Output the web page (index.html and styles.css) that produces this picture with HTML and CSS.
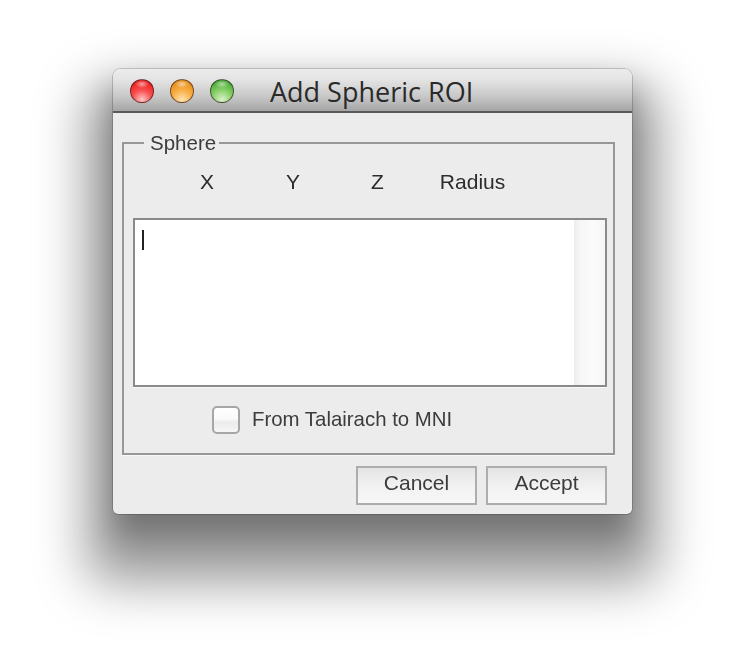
FILE: index.html
```html
<!DOCTYPE html>
<html lang="en">
<head>
<meta charset="utf-8">
<title>Add Spheric ROI</title>
<link rel="stylesheet" href="styles.css">
</head>
<body>
<div class="window">
  <header class="titlebar">
    <span class="light red"></span>
    <span class="light orange"></span>
    <span class="light green"></span>
    <span class="title">Add Spheric ROI</span>
  </header>
  <main class="content">
    <fieldset class="sphere">
      <legend class="soft">Sphere</legend>
      <div class="columns soft">
        <span class="col-x">X</span>
        <span class="col-y">Y</span>
        <span class="col-z">Z</span>
        <span class="col-r">Radius</span>
      </div>
      <div class="textarea">
        <div class="text"><span class="caret"></span></div>
        <div class="scrollbar"></div>
      </div>
      <label class="check soft">
        <span class="box"></span>
        <span class="check-label">From Talairach to MNI</span>
      </label>
    </fieldset>
    <div class="buttons">
      <button class="btn soft" type="button">Cancel</button>
      <button class="btn soft" type="button">Accept</button>
    </div>
  </main>
</div>
</body>
</html>
```
FILE: styles.css
```css
* { box-sizing: border-box; }
html, body { margin: 0; height: 100%; }
body {
  width: 746px;
  height: 672px;
  background: #fff;
  overflow: hidden;
  padding: 69px 114px 0 113px;
  font-family: "Liberation Sans", Arial, sans-serif;
}
.window {
  width: 519px;
  height: 445px;
  display: flex;
  flex-direction: column;
  background: #ececec;
  border-radius: 7px 7px 5px 5px;
  box-shadow: 0 0 0 0.5px rgba(0,0,0,.35), 0 20px 30px 0 rgba(0,0,0,.25), 0 42px 52px 26px rgba(0,0,0,.4);
}
.titlebar {
  height: 44px;
  flex: none;
  display: flex;
  align-items: center;
  padding: 2px 0 0 17px;
  gap: 16px;
  background: linear-gradient(#ececec 0, #e4e4e4 25%, #c8c8c8 65%, #a8a8a8 97%);
  border-radius: 7px 7px 0 0;
  border-bottom: 2px solid #5a5a5a;
}
.light {
  width: 24px;
  height: 24px;
  border-radius: 50%;
  flex: none;
  border: 1.5px solid rgba(40,20,20,.6);
}
.red {
  background:
    radial-gradient(ellipse 7px 4px at 50% 4px, rgba(255,255,255,.55), rgba(255,255,255,0) 100%),
    radial-gradient(circle at 50% 90%, #ffc8c8 0, #f85050 42%, #ee2626 75%, #c41a1a 100%);
}
.orange {
  background:
    radial-gradient(ellipse 7px 4px at 50% 4px, rgba(255,255,255,.55), rgba(255,255,255,0) 100%),
    radial-gradient(circle at 50% 90%, #ffe4b0 0, #f8ae44 45%, #e8901c 78%, #b07410 100%);
}
.green {
  background:
    radial-gradient(ellipse 7px 4px at 50% 4px, rgba(255,255,255,.5), rgba(255,255,255,0) 100%),
    radial-gradient(circle at 50% 90%, #dcf2cc 0, #88d068 44%, #4eae3c 78%, #2e8026 100%);
}
.title {
  margin-left: 20px;
  padding-top: 2px;
  font-family: "Open Sans", sans-serif;
  font-size: 27px;
  line-height: 30px;
  color: #2a2a2a;
  white-space: nowrap;
}
.content {
  flex: 1;
  display: flex;
  flex-direction: column;
  padding: 19px 25px 0 9px;
}
.soft { filter: blur(0.5px); }
.sphere {
  margin: 0 -8px 0 0;
  padding: 0 6px 0 9px;
  height: 323px;
  min-width: 0;
  border: 2px solid #979797;
  box-shadow: 0 1px 0 #f8f8f8;
}
.sphere legend {
  margin-left: 11px;
  padding: 0 3px 0 6px;
  line-height: 22px;
  color: #3c3c3c;
  font-size: 20.5px;
}
.columns {
  height: 42px;
  margin-top: 6px;
  display: flex;
  align-items: center;
  font-size: 21px;
  color: #2c2c2c;
  padding-top: 2px;
}
.col-x { margin-left: 67px; }
.col-y { margin-left: 72px; }
.col-z { margin-left: 71px; }
.col-r { margin-left: 56px; }
.textarea {
  margin-top: 16px;
  height: 169px;
  display: flex;
  background: #fff;
  border: 2px solid #8a8a8a;
  box-shadow: 0 1px 0 #f8f8f8;
}
.text { flex: 1; padding: 10px 0 0 7px; }
.caret { display: block; width: 2px; height: 20px; background: #222; }
.scrollbar {
  width: 31px;
  background: linear-gradient(90deg, #ececec 0, #f6f6f6 20%, #fbfbfb 60%, #f6f6f6 100%);
}
.check {
  margin: 19px 0 0 79px;
  display: flex;
  align-items: center;
  gap: 12px;
  font-size: 20.4px;
  color: #3c3c3c;
}
.check-label {
  padding-bottom: 2px;
}
.box {
  width: 28px;
  height: 28px;
  flex: none;
  border: 2px solid #a6a6a6;
  border-radius: 5px;
  background: linear-gradient(#fff, #fafafa 45%, #ececec 60%, #f6f6f6);
}
.buttons {
  display: flex;
  justify-content: flex-end;
  gap: 9px;
  margin-top: 11px;
}
.btn {
  width: 121px;
  height: 39px;
  padding: 0 0 5px;
  border: 2px solid #adadad;
  background: linear-gradient(#e4e4e4, #f0f0f0 45%, #f8f8f8);
  font: 21px "Liberation Sans", Arial, sans-serif;
  color: #3c3c3c;
}
```
